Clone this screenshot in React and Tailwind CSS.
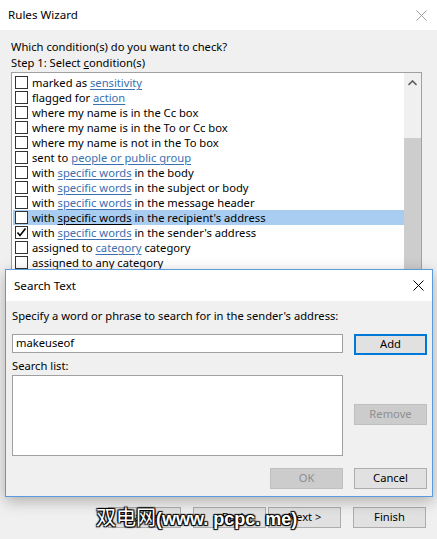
import React from 'react';

const font = { fontFamily: '"Noto Sans", "Segoe UI", sans-serif' };

const rows = [
  ['marked as ', 'sensitivity', ''],
  ['flagged for ', 'action', ''],
  ['where my name is in the Cc box', null, ''],
  ['where my name is in the To or Cc box', null, ''],
  ['where my name is not in the To box', null, ''],
  ['sent to ', 'people or public group', ''],
  ['with ', 'specific words', ' in the body'],
  ['with ', 'specific words', ' in the subject or body'],
  ['with ', 'specific words', ' in the message header'],
  ['with ', 'specific words', " in the recipient's address", 'selected'],
  ['with ', 'specific words', " in the sender's address", 'checked'],
  ['assigned to ', 'category', ' category'],
  ['assigned to any category', null, ''],
];

const Checkbox = ({ checked }) => (
  <div className="w-[13px] h-[13px] border border-[#333] bg-white flex items-center justify-center shrink-0">
    {checked && (
      <svg width="11" height="11" viewBox="0 0 11 11">
        <path d="M1.5 5.5 L4 8.5 L9.5 1.5" fill="none" stroke="#000" strokeWidth="1.6" />
      </svg>
    )}
  </div>
);

const WinButton = ({ children, disabled, primary, className = '' }) => (
  <div
    className={`h-[21px] w-[73px] flex items-center justify-center text-[11.2px] ${
      disabled
        ? 'bg-[#cccccc] border border-[#bfbfbf] text-[#8f8f8f]'
        : primary
        ? 'bg-[#e1e1e1] border-2 border-[#0078d7] text-black'
        : 'bg-[#e1e1e1] border border-[#adadad] text-black'
    } ${className}`}
  >
    {children}
  </div>
);

const CloseX = ({ color, size = 11 }) => (
  <svg width={size} height={size} viewBox="0 0 11 11">
    <path d="M0.5 0.5 L10.5 10.5 M10.5 0.5 L0.5 10.5" stroke={color} strokeWidth="1" />
  </svg>
);

export default function App() {
  return (
    <div className="relative w-[437px] h-[539px] overflow-hidden bg-[#f0f0f0] text-black" style={font}>
      {/* Rules Wizard title */}
      <div className="h-[30px] bg-white flex items-center justify-between pl-[8px] pr-[10px]">
        <span className="text-[11.6px]">Rules Wizard</span>
        <CloseX color="#a0a0a0" />
      </div>

      <div className="pl-[11px] pr-[16px] pt-[9px]">
        <div className="text-[11.2px] leading-[16px]">Which condition(s) do you want to check?</div>
        <div className="text-[11.2px] leading-[16px]">
          Step 1: Select <span className="underline">c</span>ondition(s)
        </div>
        <div className="mt-[1px] h-[300px] w-[411px] border border-[#a0a0a0] bg-white flex">
          <div className="flex-1 pt-[2px] pl-[1px]">
            {rows.map(([pre, link, post, state], i) => (
              <div
                key={i}
                className={`h-[15px] flex items-center gap-[4px] pl-[2px] text-[11.2px] whitespace-nowrap ${
                  state === 'selected' ? 'bg-[#a9cdf0]' : ''
                }`}
              >
                <Checkbox checked={state === 'checked'} />
                <span className="leading-[15px]">
                  {pre}
                  {link && (
                    <span
                      className={`underline underline-offset-2 ${
                        state === 'selected' ? 'text-black' : 'text-[#3a6fb0]'
                      }`}
                    >
                      {link}
                    </span>
                  )}
                  {post}
                </span>
              </div>
            ))}
          </div>
          <div className="w-[17px] bg-[#f0f0f0] flex flex-col items-center">
            <div className="h-[17px] mt-[1px] flex items-center justify-center">
              <svg width="9" height="6" viewBox="0 0 9 6">
                <path d="M0.5 5 L4.5 1 L8.5 5" fill="none" stroke="#606060" strokeWidth="1.6" />
              </svg>
            </div>
            <div className="mt-[47px] w-[17px] h-[200px] bg-[#cdcdcd]" />
          </div>
        </div>
      </div>

      {/* Rules Wizard bottom buttons */}
      <div className="absolute left-[108px] top-[507px] flex">
        <WinButton>Cancel</WinButton>
        <WinButton className="ml-[12px]">&lt; Back</WinButton>
        <WinButton className="ml-[2px]">Next &gt;</WinButton>
        <WinButton className="ml-[12px]">Finish</WinButton>
      </div>

      {/* Search Text dialog */}
      <div className="absolute left-[5px] top-[269px] w-[428px] h-[228px] border border-[#5a9be0] bg-[#f0f0f0] shadow-[0_4px_14px_rgba(0,0,0,0.28)] flex flex-col">
        <div className="h-[31px] bg-white flex items-center justify-between pl-[8px] pr-[8px]">
          <span className="text-[11.6px]">Search Text</span>
          <CloseX color="#000" />
        </div>
        <div className="pl-[6px] pr-[5px] pt-[7px] flex flex-col">
          <div className="text-[11.2px] leading-[16px]">Specify a word or phrase to search for in the sender's address:</div>
          <div className="mt-[10px] flex gap-[11px]">
            <div className="w-[331px] h-[19px] border border-[#a0a0a0] bg-white text-[11.2px] pl-[3px] flex items-center">
              makeuseof
            </div>
            <WinButton primary>Add</WinButton>
          </div>
          <div className="mt-[3px] text-[11.2px] leading-[16px]">Search list:</div>
          <div className="mt-[1px] flex gap-[11px]">
            <div className="w-[331px] h-[81px] border border-[#a0a0a0] bg-white" />
            <div className="pt-[29px]">
              <WinButton disabled>Remove</WinButton>
            </div>
          </div>
          <div className="mt-[12px] flex justify-end gap-[11px]">
            <WinButton disabled>OK</WinButton>
            <WinButton>Cancel</WinButton>
          </div>
        </div>
      </div>

      {/* watermark */}
      <div className="absolute left-[96px] top-[503px] leading-[28px] text-white whitespace-nowrap [text-shadow:0_0_1px_#000,1px_1px_1px_#000,-1px_-1px_1px_#000,1px_-1px_1px_#000,-1px_1px_1px_#000]">
        <span className="text-[20px]" style={{ fontFamily: '"Noto Sans CJK SC", sans-serif' }}>
          双电网
        </span>
        <span className="text-[18px] font-bold" style={{ fontFamily: '"Liberation Sans", "Noto Sans CJK SC", sans-serif' }}>
          (www. pcpc. me)
        </span>
      </div>
    </div>
  );
}
